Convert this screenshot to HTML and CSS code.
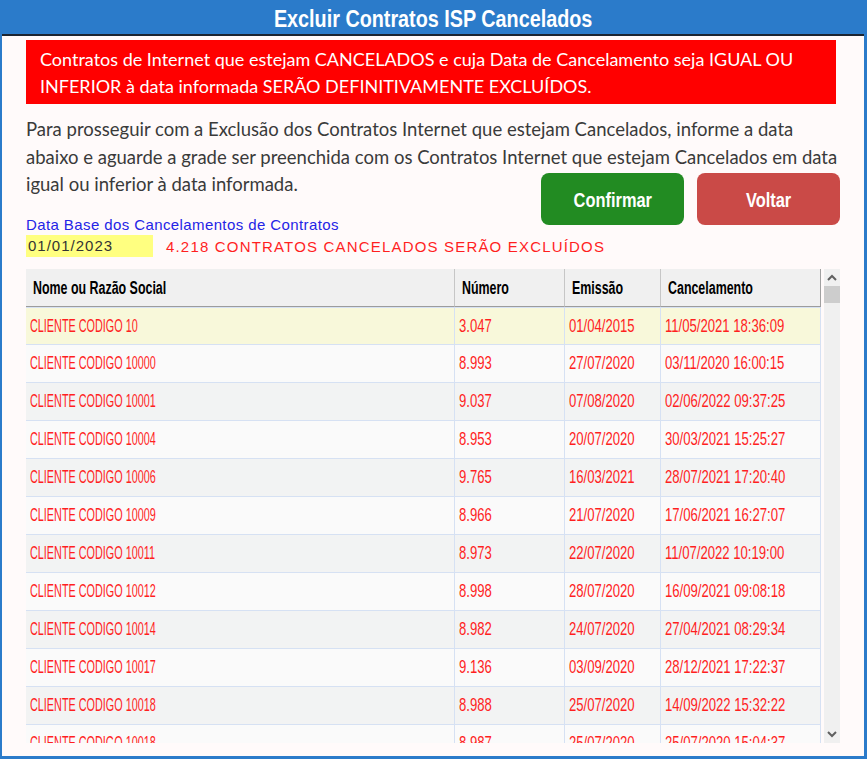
FILE: index.html
```html
<!DOCTYPE html>
<html lang="pt-BR">
<head>
<meta charset="utf-8">
<title>Excluir Contratos ISP Cancelados</title>
<link rel="stylesheet" href="styles.css">
</head>
<body>
<div class="window">
  <header class="titlebar">
    <h1 class="title"><span class="sq sq-title">Excluir Contratos ISP Cancelados</span></h1>
  </header>
  <main class="content">
    <div class="alert">Contratos de Internet que estejam CANCELADOS e cuja Data de Cancelamento seja IGUAL OU<br>INFERIOR à data informada SERÃO DEFINITIVAMENTE EXCLUÍDOS.</div>
    <p class="intro">Para prosseguir com a Exclusão dos Contratos Internet que estejam Cancelados, informe a data<br>abaixo e aguarde a grade ser preenchida com os Contratos Internet que estejam Cancelados em data</p>
    <div class="controls">
      <div class="controls-left">
        <p class="intro">igual ou inferior à data informada.</p>
        <label class="date-label" for="data-base">Data Base dos Cancelamentos de Contratos</label>
        <div class="date-row">
          <input id="data-base" class="date-input" type="text" value="01/01/2023">
          <span class="count">4.218 CONTRATOS CANCELADOS SERÃO EXCLUÍDOS</span>
        </div>
      </div>
      <div class="actions">
        <button class="btn btn-confirm" type="button"><span class="sq sq-btn">Confirmar</span></button>
        <button class="btn btn-back" type="button"><span class="sq sq-btn">Voltar</span></button>
      </div>
    </div>
    <div class="grid">
      <div class="grid-view">
        <table class="table">
          <colgroup>
            <col class="c-name"><col class="c-num"><col class="c-em"><col class="c-canc">
          </colgroup>
          <thead>
            <tr>
              <th><span class="sq sq-th">Nome ou Razão Social</span></th>
              <th><span class="sq sq-th">Número</span></th>
              <th><span class="sq sq-th">Emissão</span></th>
              <th><span class="sq sq-th">Cancelamento</span></th>
            </tr>
          </thead>
          <tbody>
            <tr class="selected"><td><span class="sq sq-name">CLIENTE CODIGO 10</span></td><td><span class="sq sq-dig">3.047</span></td><td><span class="sq sq-dig">01/04/2015</span></td><td><span class="sq sq-dig">11/05/2021 18:36:09</span></td></tr>
            <tr><td><span class="sq sq-name">CLIENTE CODIGO 10000</span></td><td><span class="sq sq-dig">8.993</span></td><td><span class="sq sq-dig">27/07/2020</span></td><td><span class="sq sq-dig">03/11/2020 16:00:15</span></td></tr>
            <tr><td><span class="sq sq-name">CLIENTE CODIGO 10001</span></td><td><span class="sq sq-dig">9.037</span></td><td><span class="sq sq-dig">07/08/2020</span></td><td><span class="sq sq-dig">02/06/2022 09:37:25</span></td></tr>
            <tr><td><span class="sq sq-name">CLIENTE CODIGO 10004</span></td><td><span class="sq sq-dig">8.953</span></td><td><span class="sq sq-dig">20/07/2020</span></td><td><span class="sq sq-dig">30/03/2021 15:25:27</span></td></tr>
            <tr><td><span class="sq sq-name">CLIENTE CODIGO 10006</span></td><td><span class="sq sq-dig">9.765</span></td><td><span class="sq sq-dig">16/03/2021</span></td><td><span class="sq sq-dig">28/07/2021 17:20:40</span></td></tr>
            <tr><td><span class="sq sq-name">CLIENTE CODIGO 10009</span></td><td><span class="sq sq-dig">8.966</span></td><td><span class="sq sq-dig">21/07/2020</span></td><td><span class="sq sq-dig">17/06/2021 16:27:07</span></td></tr>
            <tr><td><span class="sq sq-name">CLIENTE CODIGO 10011</span></td><td><span class="sq sq-dig">8.973</span></td><td><span class="sq sq-dig">22/07/2020</span></td><td><span class="sq sq-dig">11/07/2022 10:19:00</span></td></tr>
            <tr><td><span class="sq sq-name">CLIENTE CODIGO 10012</span></td><td><span class="sq sq-dig">8.998</span></td><td><span class="sq sq-dig">28/07/2020</span></td><td><span class="sq sq-dig">16/09/2021 09:08:18</span></td></tr>
            <tr><td><span class="sq sq-name">CLIENTE CODIGO 10014</span></td><td><span class="sq sq-dig">8.982</span></td><td><span class="sq sq-dig">24/07/2020</span></td><td><span class="sq sq-dig">27/04/2021 08:29:34</span></td></tr>
            <tr><td><span class="sq sq-name">CLIENTE CODIGO 10017</span></td><td><span class="sq sq-dig">9.136</span></td><td><span class="sq sq-dig">03/09/2020</span></td><td><span class="sq sq-dig">28/12/2021 17:22:37</span></td></tr>
            <tr><td><span class="sq sq-name">CLIENTE CODIGO 10018</span></td><td><span class="sq sq-dig">8.988</span></td><td><span class="sq sq-dig">25/07/2020</span></td><td><span class="sq sq-dig">14/09/2022 15:32:22</span></td></tr>
            <tr><td><span class="sq sq-name">CLIENTE CODIGO 10018</span></td><td><span class="sq sq-dig">8.987</span></td><td><span class="sq sq-dig">25/07/2020</span></td><td><span class="sq sq-dig">25/07/2020 15:04:37</span></td></tr>
          </tbody>
        </table>
      </div>
      <div class="scrollbar">
        <svg class="sb-arrow" width="16" height="17" viewBox="0 0 16 17"><path d="M4 11 L8 7 L12 11" fill="none" stroke="#606060" stroke-width="2"/></svg>
        <div class="sb-thumb"></div>
        <div class="sb-track"></div>
        <svg class="sb-arrow" width="16" height="17" viewBox="0 0 16 17"><path d="M4 6 L8 10 L12 6" fill="none" stroke="#606060" stroke-width="2"/></svg>
      </div>
    </div>
  </main>
</div>
</body>
</html>
```
FILE: styles.css
```css
html, body {
  margin: 0;
  padding: 0;
  background: #fffafa;
}

.window {
  box-sizing: border-box;
  width: 867px;
  height: 759px;
  border-left: 2px solid #2b7bca;
  border-right: 3px solid #2b7bca;
  border-bottom: 3px solid #2b7bca;
  background: #fffafa;
  display: flex;
  flex-direction: column;
  overflow: hidden;
  font-family: "Liberation Sans", Arial, sans-serif;
}

.titlebar {
  background: #2b7bca;
  height: 34px;
  border-bottom: 2px solid #1c2430;
  margin-left: -2px;
  margin-right: -3px;
}

.title {
  margin: 0;
  padding-top: 5px;
  text-align: center;
  color: #ffffff;
  font-size: 23px;
  font-weight: bold;
  line-height: 28px;
}

.sq {
  display: inline-block;
  transform-origin: left center;
  white-space: nowrap;
}

.sq-title {
  transform: scaleX(0.86);
  transform-origin: center center;
}

.content {
  padding: 4px 24px 0 24px;
  display: flex;
  flex-direction: column;
}

.alert {
  background: #ff0000;
  color: #ffffff;
  font-family: Lato, "Liberation Sans", sans-serif;
  font-size: 18px;
  line-height: 27px;
  padding: 6px 14px 4px 14px;
  margin-right: 4px;
  height: 54px;
  white-space: nowrap;
}

.intro {
  margin: 12px 0 0 0;
  color: #3a3a3a;
  font-family: Lato, "Liberation Sans", sans-serif;
  font-size: 18.5px;
  line-height: 27.5px;
  white-space: nowrap;
}

.controls {
  display: flex;
  justify-content: space-between;
  align-items: flex-start;
}

.controls-left {
  flex: 1;
  min-width: 0;
  display: flex;
  flex-direction: column;
}

.controls-left .intro {
  margin-top: 0;
}

.date-label {
  margin-top: 17px;
  color: #2424e6;
  font-size: 15px;
  line-height: 17px;
  letter-spacing: 0.4px;
  white-space: nowrap;
}

.date-row {
  margin-top: 2px;
  display: flex;
  align-items: center;
  white-space: nowrap;
}

.date-input {
  box-sizing: border-box;
  flex: none;
  width: 127px;
  height: 22px;
  border: none;
  outline: none;
  padding: 0 2px;
  margin: 0;
  background: #ffff80;
  color: #333333;
  font-family: "Liberation Sans", Arial, sans-serif;
  font-size: 15px;
  letter-spacing: 1px;
}

.count {
  flex: none;
  margin-left: 13px;
  color: #ff1f1f;
  font-size: 15px;
  letter-spacing: 1.18px;
  padding-top: 2px;
  white-space: nowrap;
}

.actions {
  flex: none;
  display: flex;
  gap: 13px;
  margin-top: 2px;
}

.btn {
  width: 143px;
  height: 52px;
  border: none;
  border-radius: 8px;
  color: #ffffff;
  font-family: "Liberation Sans", Arial, sans-serif;
  font-size: 20px;
  font-weight: bold;
  display: flex;
  align-items: center;
  justify-content: center;
  padding: 2px 0 0 0;
}

.sq-btn {
  transform: scaleX(0.82);
  transform-origin: center center;
}

.btn-confirm {
  background: #228b22;
}

.btn-back {
  background: #ca4a47;
}

.grid {
  margin-top: 12px;
  height: 474px;
  display: flex;
}

.grid-view {
  width: 795px;
  height: 474px;
  overflow: hidden;
}

.table {
  table-layout: fixed;
  width: 795px;
  border-collapse: separate;
  border-spacing: 0;
}

.c-name { width: 429px; }
.c-num { width: 110px; }
.c-em { width: 96px; }
.c-canc { width: 160px; }

.table th {
  box-sizing: border-box;
  height: 38px;
  padding: 3px 0 0 7px;
  text-align: left;
  background: #f0f0f0;
  border-right: 1px solid #c6c6c6;
  border-bottom: 1px solid #9c9c9c;
  color: #000000;
  font-size: 18px;
  font-weight: bold;
  overflow: hidden;
}

.table th:last-child {
  border-right: 1px solid #a0a0a0;
}

.sq-th {
  transform: scaleX(0.69);
}

.table td {
  box-sizing: border-box;
  height: 38px;
  padding: 0 0 0 4px;
  border-right: 1px solid #d6e1f3;
  border-bottom: 1px solid #d6e1f3;
  color: #ff1f1f;
  font-size: 19px;
  overflow: hidden;
  background: #fafafa;
}

.table tbody tr:first-child td {
  border-top: 1px solid #d6e1f3;
}

.table tbody tr:nth-child(odd) td {
  background: #f2f3f3;
}

.table tbody tr.selected td {
  background: #f8f8da;
}

.sq-name {
  transform: scaleX(0.57);
}

.sq-dig {
  transform: scaleX(0.69);
}

.scrollbar {
  width: 16px;
  height: 474px;
  margin-left: 3px;
  background: #f0f0f0;
  display: flex;
  flex-direction: column;
}

.sb-arrow {
  display: block;
  flex: none;
}

.sb-thumb {
  height: 17px;
  background: #cdcdcd;
}

.sb-track {
  flex: 1;
}
```
